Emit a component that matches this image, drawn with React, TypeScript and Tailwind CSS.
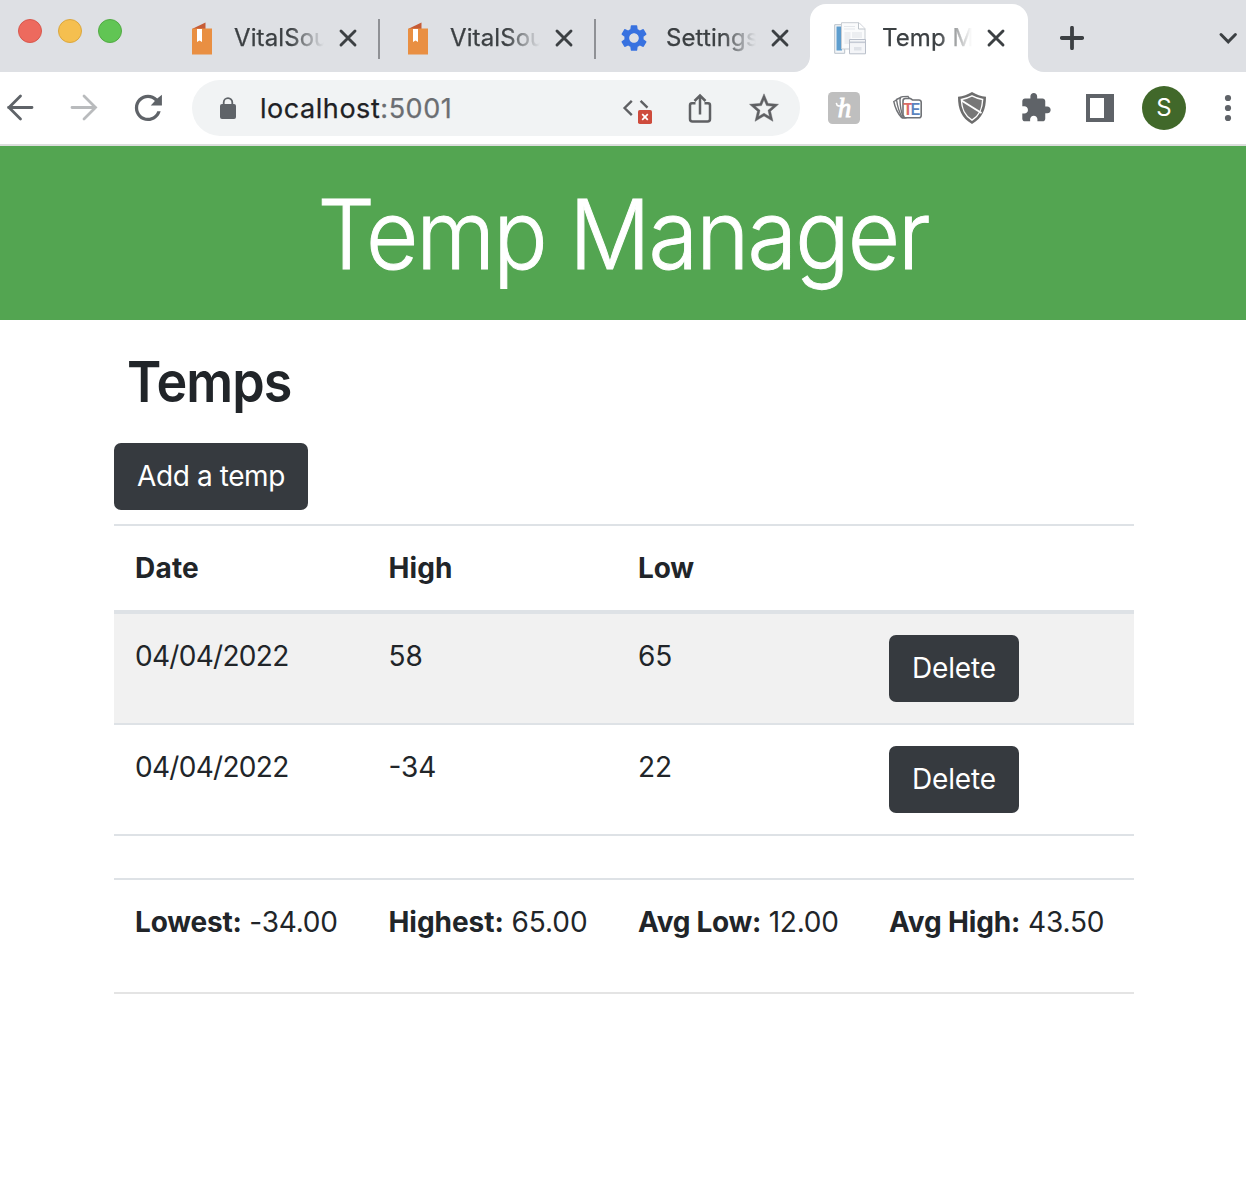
import React from "react";
import { MdSettings } from "react-icons/md";

const VitalSourceIcon = () => (
  <svg width="24" height="34" viewBox="0 0 24 34">
    <path d="M1 7.5 13.5 1.5V8H1z" fill="#c65c36" />
    <path d="M0 7.5h20V33.5H0z" fill="#e98f42" />
    <path d="M5 8h5v13l-2.5-1.6L5 21z" fill="#fff" />
  </svg>
);

const PagesIcon = () => (
  <svg width="32" height="33" viewBox="0 0 32 33">
    <path d="M.7 2.7h10v28.6H.7z" fill="#f4f6f8" stroke="#b9c2cb" />
    <path d="M2.500 4.500h5.500v24H2.500z" fill="#5d9dce" />
    <path d="M7.5.7H25l6 6V27H7.5z" fill="#fafbfc" stroke="#c8cdd3" />
    <path d="M24.5 1v6H31" fill="#fff" stroke="#bfc5cb" />
    <path d="M10 4.5h11M10 7h11" stroke="#e4e7eb" />
    <path d="M10.500 10h6v12h-6zM18 10h10v6H18z" fill="#eceef1" />
    <path d="M15.5 17.5h16v14.3h-16z" fill="#f4f5f8" stroke="#b9bfca" />
    <path d="M16 20.3h15" stroke="#c5cad5" strokeWidth="1.6" />
    <path d="M20 25h7.500v3.500H20z" fill="#dfe2e8" />
  </svg>
);

const Cross = () => (
  <svg width="20" height="20" viewBox="0 0 20 20">
    <path d="M3 3 17 17M17 3 3 17" stroke="#3c4043" strokeWidth="2.9" strokeLinecap="round" />
  </svg>
);

function TabContent({ icon, title }: { icon: React.ReactNode; title: string }) {
  return (
    <>
      <span className="flex w-[42px] shrink-0 items-center">{icon}</span>
      <span className="mr-[14px] w-[90px] overflow-hidden whitespace-nowrap text-[24px] leading-8 tracking-[0.1px] text-[#3c4043] [-webkit-text-stroke:0.25px_#3c4043] [mask-image:linear-gradient(to_right,#000_62%,transparent_100%)]">
        {title}
      </span>
      <Cross />
    </>
  );
}

function TabStrip() {
  return (
    <div className="flex h-[72px] bg-white">
      <div className="flex w-[810px] shrink-0 rounded-br-[16px] bg-[#dee0e4]">
        <div className="flex w-[164px] shrink-0 gap-4 pt-[19px] pl-[18px]">
          <span className="size-6 rounded-full border border-[#d8584d] bg-[#ed6a5e]" />
          <span className="size-6 rounded-full border border-[#dba73e] bg-[#f5bf4f]" />
          <span className="size-6 rounded-full border border-[#52ab43] bg-[#61c554]" />
        </div>
        <div className="mt-[19px] flex h-10 w-[216px] items-center border-r-2 border-[#8f9195] pb-[2px] pl-7">
          <TabContent icon={<VitalSourceIcon />} title="VitalSource" />
        </div>
        <div className="mt-[19px] flex h-10 w-[216px] items-center border-r-2 border-[#8f9195] pb-[2px] pl-7">
          <TabContent icon={<VitalSourceIcon />} title="VitalSource" />
        </div>
        <div className="mt-[18px] flex h-10 w-[214px] items-center pl-7">
          <TabContent
            icon={<MdSettings className="-ml-[6px] size-[32px] shrink-0 text-[#3872e0]" />}
            title="Settings"
          />
        </div>
      </div>
      <div className="w-[218px] shrink-0 bg-[#dee0e4] pt-1">
        <div className="flex h-[68px] items-center rounded-t-[16px] bg-white pl-6">
          <span className="w-[6px]" />
          <TabContent icon={<span className="-ml-[6px]"><PagesIcon /></span>} title="Temp Manager" />
        </div>
      </div>
      <div className="flex grow items-center justify-between rounded-bl-[16px] bg-[#dee0e4] pt-1 pl-8">
        <svg width="24" height="24" viewBox="0 0 24 24">
          <path d="M12 1.8v20.4M1.8 12h20.4" stroke="#3c4043" strokeWidth="3.8" strokeLinecap="round" />
        </svg>
        <svg className="mr-2" width="20" height="20" viewBox="0 0 20 20">
          <path d="m3 6.5 7.2 7.3 7.2-7.3" fill="none" stroke="#3c4043" strokeWidth="3" strokeLinecap="round" />
        </svg>
      </div>
    </div>
  );
}

function Icon({ children }: { children: React.ReactNode }) {
  return (
    <svg className="shrink-0" width="40" height="40" viewBox="0 0 40 40" fill="none" stroke="none">
      {children}
    </svg>
  );
}

function Toolbar() {
  return (
    <div className="flex h-[74px] items-center gap-6 overflow-hidden border-b-2 border-[#dcdedd] bg-white">
      <Icon>
        <path d="M8.5 19.5H32M20.5 8 9 19.5 20.5 31" stroke="#5f6368" strokeWidth="2.8" strokeLinecap="round" />
      </Icon>
      <Icon>
        <path d="M8 19.5H31.5M20 8 31.5 19.5 20 31" stroke="#b9bbbd" strokeWidth="2.8" strokeLinecap="round" />
      </Icon>
      <Icon>
        <path
          transform="translate(.3 .2) scale(1.64)"
          fill="#5f6368"
          d="M17.65 6.35C16.2 4.9 14.21 4 12 4c-4.42 0-7.99 3.58-7.99 8s3.57 8 7.99 8c3.73 0 6.84-2.55 7.73-6h-2.08c-.82 2.33-3.04 4-5.65 4-3.31 0-6-2.69-6-6s2.69-6 6-6c1.66 0 3.14.69 4.22 1.78L13.7 10.6H20.5V4l-2.85 2.35z"
        />
      </Icon>
      <div className="flex h-14 w-[608px] shrink-0 items-center rounded-full bg-[#f1f3f4] px-4">
        <Icon>
          <rect x="12" y="16" width="16" height="15" rx="2" fill="#5f6368" />
          <path d="M15.7 17v-2.5a4.3 4.3 0 0 1 8.6 0V17" stroke="#5f6368" strokeWidth="1.8" />
        </Icon>
        <span className="ml-3 grow pt-[2px] text-[27px] tracking-[0.55px] text-[#202124] [-webkit-text-stroke:0.25px]">
          localhost<span className="text-[#6b6e72]">:5001</span>
        </span>
        <div className="flex gap-6">
          <Icon>
            <path d="M15.8 12.8 8.6 20l7.2 7.2M24.6 12.8 31.5 19.7" stroke="#5f6063" strokeWidth="2.4" />
            <rect x="22" y="22" width="14" height="14" rx="1.8" fill="#ce4b3c" />
            <path d="m26.2 26.2 5.6 5.6m0-5.6-5.6 5.6" stroke="#fff" strokeWidth="1.7" />
          </Icon>
          <Icon>
            <path d="M15.5 15.2H12a2 2 0 0 0-2 2V31a2.5 2.5 0 0 0 2.500 2.500h15A2.500 2.500 0 0 0 30 31V17.200a2 2 0 0 0-2-2h-3.500M20 26.500V8M14.500 13 20 7.500 25.500 13" stroke="#5f6063" strokeWidth="2.500" />
          </Icon>
          <Icon>
            <path
              transform="translate(2.600 2.900) scale(1.45)"
              fill="#5f6063"
              stroke="#5f6063"
              strokeWidth=".3"
              d="M22 9.240l-7.190-.62L12 2 9.190 8.630 2 9.240l5.460 4.730L5.820 21 12 17.270 18.180 21l-1.630-7.030L22 9.240zM12 15.400l-3.760 2.270 1-4.280-3.320-2.880 4.380-.38L12 6.100l1.710 4.040 4.380.38-3.320 2.880 1 4.280L12 15.400z"
            />
          </Icon>
        </div>
      </div>
      <Icon>
        <rect x="4" y="4" width="32" height="32" rx="4.500" fill="#bfbfbf" />
        <text x="20.500" y="28.500" textAnchor="middle" fill="#fff" stroke="#fff" strokeWidth=".9" className="font-['Liberation_Serif',serif] text-[27px] italic">
          h
        </text>
        <path d="M12.500 15.500c.3 2.800 3 3.200 5.500 1.500" stroke="#fff" strokeWidth="1.700" strokeLinecap="round" />
      </Icon>
      <Icon>
        <g fill="#fff" stroke="#707276" strokeWidth="1.400">
          <path d="M5.800 13.500 9 11.800 16 27.500 13.500 29.500c-4-4.500-6.500-10-7.700-16z" />
          <path d="M8.500 11.500 12.500 9.600 17 28 14.500 30c-3-5-5-11-6-18.500z" />
          <path d="M12 11.500c0-2 1-2.800 3-2.900l5-.2 2 3-4 18.500-2.500.1C13.500 25 12 18 12 11.500z" />
          <path d="M15 13a2.500 2.500 0 0 1 2.500-2.500h5l2 1.500H31a2.200 2.200 0 0 1 2.200 2.200V27.500a2.300 2.300 0 0 1-2.300 2.300H16.500l-1.500-3z" strokeWidth="1.600" />
        </g>
        <text x="15" y="26.500" className="font-['Liberation_Sans',sans-serif] text-[16px] font-bold">
          <tspan fill="#dc6b65">T</tspan>
          <tspan fill="#5c84bd" x="22.800" textLength="9.500" lengthAdjust="spacingAndGlyphs">E</tspan>
        </text>
      </Icon>
      <Icon>
        <path d="M20 4c4.500 2.700 9 4.200 14 4.800 0 12.800-3.500 21-14 27.200C9.500 29.800 6 21.600 6 8.800 11 8.200 15.500 6.700 20 4z" fill="#6d6d6d" />
        <path d="M20 7.900c3.600 1.900 7 3 10.600 3.600-.3 10-3.100 15.900-10.600 20.700C12.500 27.400 9.700 21.500 9.400 11.500 13 10.900 16.400 9.800 20 7.900z" fill="#777" stroke="#fff" strokeWidth="1.500" />
        <path d="M9.500 12.500 29.500 25" stroke="#fff" strokeWidth="2" />
      </Icon>
      <Icon>
        <path
          transform="translate(3.600 3.650) scale(1.350)"
          fill="#5f6368"
          d="M20.500 11H19V7c0-1.100-.9-2-2-2h-4V3.500C13 2.120 11.880 1 10.500 1S8 2.120 8 3.500V5H4c-1.100 0-1.990.9-1.990 2v3.800H3.500c1.490 0 2.700 1.210 2.700 2.700s-1.210 2.700-2.700 2.700H2V20c0 1.100.9 2 2 2h3.800v-1.500c0-1.490 1.210-2.700 2.700-2.700 1.490 0 2.700 1.210 2.700 2.700V22H17c1.100 0 2-.9 2-2v-4h1.500c1.380 0 2.500-1.120 2.500-2.500S21.880 11 20.500 11z"
        />
      </Icon>
      <Icon>
        <path d="M6 6h28v28H6z" fill="#5f6368" />
        <path d="M10 10h14v20H10z" fill="#fff" />
      </Icon>
      <div className="-mx-0.5 flex size-11 shrink-0 items-center justify-center rounded-full bg-[#41682a] text-[24px] text-white">
        S
      </div>
      <Icon>
        <g fill="#5f6368">
          <circle cx="20" cy="10" r="3.100" />
          <circle cx="20" cy="20" r="3.100" />
          <circle cx="20" cy="30" r="3.100" />
        </g>
      </Icon>
    </div>
  );
}

function DarkButton({ children }: { children: React.ReactNode }) {
  return (
    <button className="block h-[67px] rounded-[7px] bg-[#363a3f] px-[23px] pb-[2px] whitespace-nowrap text-white">
      {children}
    </button>
  );
}

const temps = [
  { date: "04/04/2022", high: "58", low: "65" },
  { date: "04/04/2022", high: "-34", low: "22" },
];

const stats = [
  { label: "Lowest:", value: "-34.00", spacing: "pl-[21px] tracking-[-0.2px]" },
  { label: "Highest:", value: "65.00", spacing: "pl-[20.5px] tracking-[-0.05px]" },
  { label: "Avg Low:", value: "12.00", spacing: "pl-[20px] tracking-[-0.28px]" },
  { label: "Avg High:", value: "43.50", spacing: "pl-[21px] tracking-[-0.15px]" },
];

export default function App() {
  return (
    <div className="h-[1200px] w-[1246px] overflow-hidden bg-white font-['Inter',sans-serif]">
      <TabStrip />
      <Toolbar />
      <header className="flex h-[174px] items-center justify-center bg-[#53a551] pt-[2px]">
        <h1 className="scale-x-[0.94] text-[96px] leading-none font-light tracking-[-2px] whitespace-nowrap text-white [-webkit-text-stroke:1px_#fff]">
          Temp Manager
        </h1>
      </header>
      <main className="mx-auto w-[1020px] pl-px text-[28px] leading-[42px] text-[#212529]">
        <h2 className="origin-left scale-x-[0.93] pt-[30px] pl-[14px] text-[56px] leading-[65px] font-semibold tracking-[-1px]">
          Temps
        </h2>
        <div className="mt-[28px] tracking-[-0.4px]">
          <DarkButton>Add a temp</DarkButton>
        </div>
        <div className="mt-[14px] w-[1020px]">
          <div className="grid h-[90px] grid-cols-[254px_250px_250px_266px] border-t-2 border-b-4 border-[#dee2e6] pt-[21px] font-bold">
            <span className="pl-[21px] tracking-[0.2px]">Date</span>
            <span className="pl-[20.5px] tracking-[0.1px]">High</span>
            <span className="pl-[20px] tracking-[-0.2px]">Low</span>
          </div>
          {temps.map((t, i) => (
            <div
              key={i}
              className="grid h-[111px] grid-cols-[254px_250px_250px_266px] border-b-2 border-[#dee2e6] pt-[21px] odd:bg-white even:bg-[#f1f1f1]"
            >
              <span className="pl-[21px] tracking-[-0.7px]">{t.date}</span>
              <span className="pl-[20.5px]">{t.high}</span>
              <span className="pl-[20px]">{t.low}</span>
              <span className="pl-[21px] tracking-[-0.15px]">
                <DarkButton>Delete</DarkButton>
              </span>
            </div>
          ))}
        </div>
        <div className="mt-[42px] grid h-[116px] w-[1020px] grid-cols-[254px_250px_250px_266px] border-t-2 border-b-2 border-t-[#dee2e6] border-b-[#e4e4e4] pt-[21px] whitespace-nowrap">
          {stats.map((s) => (
            <span key={s.label} className={s.spacing}>
              <b>{s.label}</b> {s.value}
            </span>
          ))}
        </div>
      </main>
    </div>
  );
}
